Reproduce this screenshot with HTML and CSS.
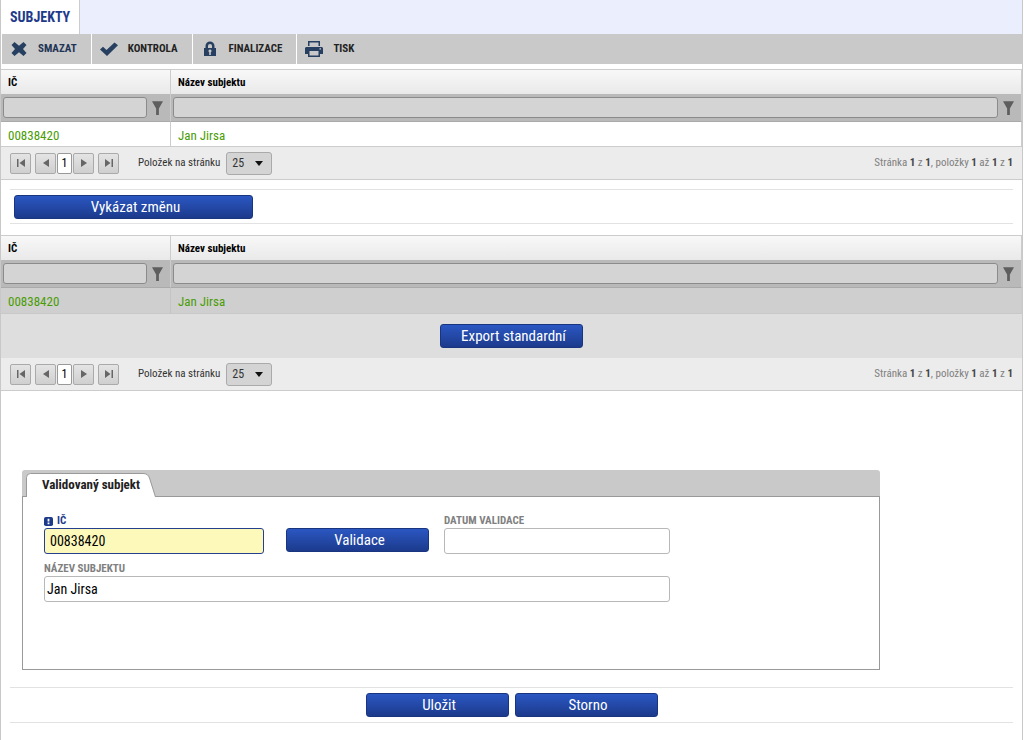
FILE: index.html
```html
<!DOCTYPE html>
<html lang="cs">
<head>
<meta charset="utf-8">
<meta name="viewport" content="width=device-width, initial-scale=1">
<title>Subjekty</title>
<link rel="stylesheet" href="styles.css">
</head>
<body>
<svg class="defs" aria-hidden="true">
  <symbol id="funnel" viewBox="0 0 12 15"><path d="M0 0h12L7.500 8v7h-3V8z"/></symbol>
  <symbol id="first" viewBox="0 0 8 8"><path d="M0 0h1.500v8H0zM8 0v8L2.500 4z"/></symbol>
  <symbol id="prev" viewBox="0 0 8 8"><path d="M7 0v8L1 4z"/></symbol>
  <symbol id="next" viewBox="0 0 8 8"><path d="M1 0v8l6-4z"/></symbol>
  <symbol id="last" viewBox="0 0 8 8"><path d="M0 0v8l5.500-4zM6.500 0H8v8H6.500z"/></symbol>
</svg>
<div class="page">
  <nav class="tabs"><a class="tab" href="#subjekty">SUBJEKTY</a></nav>
  <div class="toolbar">
    <button class="tool tool-active" type="button">
      <svg class="tool-icon" viewBox="0 0 18 18"><path d="M4.500 2 9 5.700 13.500 2 16.500 5 13 9l3.500 4-3 3L9 12.300 4.500 16l-3-3L5 9 1.500 5z"/></svg>SMAZAT</button>
    <button class="tool" type="button">
      <svg class="tool-icon" viewBox="0 0 18 18"><path d="M0 9.500 3 6.800 6.500 10 14.500 2.500 18 5.200 7 16z"/></svg>KONTROLA</button>
    <button class="tool" type="button">
      <svg class="tool-icon" viewBox="0 0 18 18"><path fill-rule="evenodd" d="M3 8h1.500V6a4.500 4.500 0 0 1 9 0v2H15v8H3zm4 0h4V6a2 2 0 0 0-4 0zM9 9.500a1.500 1.500 0 0 0-.8 2.800V15h1.600v-2.700A1.500 1.500 0 0 0 9 9.500z"/></svg>FINALIZACE</button>
    <button class="tool" type="button">
      <svg class="tool-icon" viewBox="0 0 18 18"><path fill-rule="evenodd" d="M3 1h12v5h-1.500V2.500h-9V6H3zM1 7h16l1 1v6h-3v3H3v-3H0V8zM4.500 11v4.500h9V11zM14.500 8.200v1.200H16V8.200z"/></svg>TISK</button>
  </div>

  <section class="grid">
    <table class="table">
      <colgroup><col class="col-id"><col></colgroup>
      <thead>
        <tr><th>IČ</th><th>Název subjektu</th></tr>
        <tr class="filters">
          <td><div class="filter"><input type="text" aria-label="Filtr IČ"><button type="button" aria-label="Filtrovat IČ"><svg><use href="#funnel"/></svg></button></div></td>
          <td><div class="filter"><input type="text" aria-label="Filtr názvu"><button type="button" aria-label="Filtrovat název"><svg><use href="#funnel"/></svg></button></div></td>
        </tr>
      </thead>
      <tbody><tr><td>00838420</td><td>Jan Jirsa</td></tr></tbody>
    </table>
    <div class="pager">
      <button class="page-btn" type="button" aria-label="První"><svg><use href="#first"/></svg></button>
      <div class="page-group">
        <button class="page-btn" type="button" aria-label="Předchozí"><svg><use href="#prev"/></svg></button>
        <button class="page-current" type="button">1</button>
        <button class="page-btn" type="button" aria-label="Další"><svg><use href="#next"/></svg></button>
      </div>
      <button class="page-btn" type="button" aria-label="Poslední"><svg><use href="#last"/></svg></button>
      <label class="page-size">Položek na stránku <select><option>25</option></select></label>
      <span class="summary">Stránka <b>1</b> z <b>1</b>, položky <b>1</b> až <b>1</b> z <b>1</b></span>
    </div>
  </section>

  <div class="actions"><button class="btn btn-wide" type="button">Vykázat změnu</button></div>

  <section class="grid">
    <table class="table table-selected">
      <colgroup><col class="col-id"><col></colgroup>
      <thead>
        <tr><th>IČ</th><th>Název subjektu</th></tr>
        <tr class="filters">
          <td><div class="filter"><input type="text" aria-label="Filtr IČ"><button type="button" aria-label="Filtrovat IČ"><svg><use href="#funnel"/></svg></button></div></td>
          <td><div class="filter"><input type="text" aria-label="Filtr názvu"><button type="button" aria-label="Filtrovat název"><svg><use href="#funnel"/></svg></button></div></td>
        </tr>
      </thead>
      <tbody><tr><td>00838420</td><td>Jan Jirsa</td></tr></tbody>
    </table>
    <div class="export"><button class="btn" type="button">Export standardní</button></div>
    <div class="pager">
      <button class="page-btn" type="button" aria-label="První"><svg><use href="#first"/></svg></button>
      <div class="page-group">
        <button class="page-btn" type="button" aria-label="Předchozí"><svg><use href="#prev"/></svg></button>
        <button class="page-current" type="button">1</button>
        <button class="page-btn" type="button" aria-label="Další"><svg><use href="#next"/></svg></button>
      </div>
      <button class="page-btn" type="button" aria-label="Poslední"><svg><use href="#last"/></svg></button>
      <label class="page-size">Položek na stránku <select><option>25</option></select></label>
      <span class="summary">Stránka <b>1</b> z <b>1</b>, položky <b>1</b> až <b>1</b> z <b>1</b></span>
    </div>
  </section>

  <form class="panel">
    <div class="panel-head">
      <button class="panel-tab" type="button">
        <svg class="panel-tab-shape" viewBox="0 0 130 24"><path d="M.5 24V4.500Q.5.500 4.500.500H117Q122 .5 123.500 5L129.500 24"/></svg>
        <span>Validovaný subjekt</span>
      </button>
    </div>
    <div class="panel-body">
      <div class="field field-id">
        <label class="label-required" for="ic"><svg viewBox="0 0 10 10"><rect width="10" height="10" rx="2"/><path d="M4 2h2v3H4zM4 6h2v2H4z"/></svg>IČ</label>
        <input class="input-required" id="ic" type="text" value="00838420">
      </div>
      <button class="btn" type="button">Validace</button>
      <div class="field">
        <label for="datum">DATUM VALIDACE</label>
        <input id="datum" type="text">
      </div>
      <div class="field field-full">
        <label for="nazev">NÁZEV SUBJEKTU</label>
        <input id="nazev" type="text" value="Jan Jirsa">
      </div>
    </div>
  </form>

  <div class="actions actions-center">
    <button class="btn" type="button">Uložit</button>
    <button class="btn" type="button">Storno</button>
  </div>
</div>
</body>
</html>
```

FILE: styles.css
```css
* { box-sizing: border-box; }
body {
  margin: 0;
  background: #fff;
  color: #333;
  font: 13px/16px "Roboto Condensed", "Liberation Sans Narrow", Roboto, sans-serif;
}
button, input, select { font: inherit; color: inherit; margin: 0; }
button { padding: 0; border: 0; background: none; cursor: pointer; }
svg { display: block; fill: currentColor; }
.defs { display: none; }

.page {
  min-height: 100vh;
  margin-right: 1px;
  border: solid #c8c8c8;
  border-width: 0 1px;
}
.tabs { display: flex; height: 34px; background: #ebeffd; }
.tab {
  padding: 9px 9px 0;
  border-right: 1px solid #ccc;
  background: #fff;
  color: #1e3a8a;
  font-size: 14px;
  font-weight: 700;
  text-decoration: none;
}

.toolbar { display: flex; height: 30px; margin: 0 0 5px 1px; background: #c9c9c9; }
.tool {
  display: flex;
  align-items: center;
  gap: 10px;
  padding: 0 14px 0 8px;
  color: #222;
  font-size: 11px;
  font-weight: 700;
}
.tool + .tool { border-left: 1px solid #fff; }
.tool-active { color: #1f3556; }
.tool-icon { width: 18px; height: 18px; color: #273f60; }

.grid { border-top: 1px solid #ccc; }
.table { width: 100%; border-collapse: separate; border-spacing: 0; table-layout: fixed; }
.col-id { width: 170px; }
.table th {
  height: 24px;
  padding: 2px 7px 0;
  background: linear-gradient(#f8f8f8, #e9e9e9);
  color: #000;
  font-size: 11px;
  font-weight: 700;
  text-align: left;
}
.table th:first-child, .table td:first-child { border-right: 1px solid #ccc; }
.table th:last-child, .table td:last-child { border-right: 1px solid #ccc; }
.table .filters td { height: 28px; padding: 0 7px 0 2px; background: #b9b9b9; border-bottom: 1px solid #aaa; }
.filter { display: flex; align-items: center; gap: 5px; }
.filter input {
  flex: 1;
  min-width: 0;
  height: 21px;
  padding: 0 4px;
  border: 1px solid #8b8b8b;
  border-radius: 3px;
  background: #d4d4d4;
}
.filter svg { width: 11px; height: 14px; color: #5e5e5e; }
.table tbody td { height: 24px; padding: 3px 7px 0; color: #4a9c05; }
.table-selected tbody td { height: 26px; padding-top: 2px; background: #cfcfcf; border-bottom: 1px solid #c8c8c8; }
.table-selected tbody td:first-child { border-right-color: #c4c4c4; }

.export { display: flex; align-items: center; justify-content: center; height: 44px; background: #dedede; }

.pager {
  display: flex;
  align-items: center;
  gap: 4px;
  height: 34px;
  padding: 0 9px;
  border: solid #ccc;
  border-width: 1px 0;
  background: #ececec;
  font-size: 11px;
}
.export + .pager { height: 33px; border-top: 0; }
.page-group { display: flex; gap: 1px; }
.page-btn {
  display: grid;
  place-items: center;
  width: 21px;
  height: 21px;
  border: 1px solid #aaa;
  border-radius: 2px;
  background: linear-gradient(#e4e4e4, #cfcfcf);
  color: #666;
}
.page-btn svg { width: 8px; height: 8px; }
.page-current {
  width: 15px;
  height: 21px;
  border: 1px solid #999;
  border-radius: 2px;
  background: #fff;
  color: #000;
  font-size: 12px;
}
.page-size { display: flex; align-items: center; gap: 6px; margin-left: 15px; }
.page-size select {
  appearance: none;
  width: 46px;
  height: 23px;
  padding: 0 5px;
  border: 1px solid #aaa;
  border-radius: 3px;
  background: #d4d4d4 url("data:image/svg+xml,%3Csvg xmlns='http://www.w3.org/2000/svg' width='8' height='5'%3E%3Cpath d='M0 0h8L4 5z' fill='%23111'/%3E%3C/svg%3E") no-repeat right 8px center;
  font-size: 12px;
}
.summary { margin-left: auto; color: #808080; }
.summary b { color: #444; }

.actions {
  display: flex;
  gap: 6px;
  margin: 9px 9px 11px;
  padding: 5px 4px 4px;
  border: solid #e2e2e2;
  border-width: 1px 0;
}
.actions-center { justify-content: center; margin: 17px 9px; padding-bottom: 5px; }
.btn {
  width: 143px;
  height: 24px;
  padding-left: 4px;
  border: 1px solid #1a3580;
  border-radius: 3px;
  background: linear-gradient(#2b57c2, #1c3a8c);
  color: #fff;
  font-size: 15px;
  line-height: 20px;
}
.btn-wide { width: 239px; }

.panel { width: 84%; margin: 79px 0 0 21px; }
.panel-head {
  height: 27px;
  padding: 3px 0 0 4px;
  border-bottom: 1px solid #999;
  border-radius: 3px 3px 0 0;
  background: #c9c9c9;
}
.panel-tab {
  display: grid;
  align-items: center;
  height: 24px;
  color: #222;
  font-size: 13px;
  font-weight: 700;
}
.panel-tab > * { grid-area: 1 / 1; }
.panel-tab-shape { width: 130px; height: 24px; fill: #fff; stroke: #999; }
.panel-body {
  display: grid;
  grid-template-columns: 242px 158px 226px;
  align-content: start;
  align-items: end;
  min-height: 173px;
  padding: 17px 21px;
  border: solid #999;
  border-width: 0 1px 1px;
}
.panel-body .btn { margin-bottom: 2px; }
.field { display: flex; flex-direction: column; }
.field-id { padding-right: 22px; }
.field-full { grid-column: 1 / -1; margin-top: 8px; }
.field label { height: 14px; color: #808080; font-size: 11px; line-height: 14px; font-weight: 700; }
.field .label-required { display: flex; align-items: center; gap: 4px; color: #1e3a8a; }
.label-required svg { width: 9px; height: 9px; }
.label-required path { fill: #fff; }
.field input {
  width: 100%;
  height: 26px;
  padding: 0 2px;
  border: 1px solid #b8b8b8;
  border-radius: 3px;
  background: #fff;
  color: #000;
  font-size: 14px;
}
.field .input-required { padding: 0 5px; border-color: #24408f; background: #fdf9bb; }
```
